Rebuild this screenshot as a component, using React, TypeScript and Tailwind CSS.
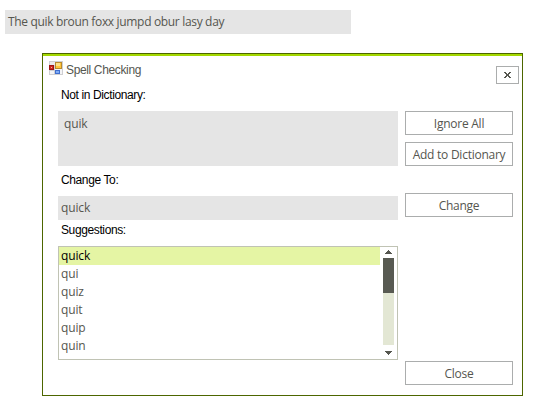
const suggestions = ["quick", "qui", "quiz", "quit", "quip", "quin"];

const ui = "font-['Open_Sans','Noto_Sans',sans-serif] text-[12px] text-[#55564f]";
const label = "font-['Liberation_Sans',Arial,sans-serif] text-[12px] leading-[14px] tracking-[-0.38px] text-black pl-[3px] whitespace-nowrap";

function Button({ text, className = "" }: { text: string; className?: string }) {
  return (
    <button className={`${ui} flex h-6 w-[108px] shrink-0 items-center justify-center border border-[#abadad] bg-white pt-px tracking-[-0.25px] whitespace-nowrap ${className}`}>
      {text}
    </button>
  );
}

function FormIcon() {
  return (
    <svg width="14" height="14" viewBox="0 0 14 14" shapeRendering="crispEdges">
      <rect width="14" height="14" fill="#cfcfd2" />
      <rect x="1" y="1" width="5" height="3" fill="#e9e9ec" />
      <rect x="1" y="10" width="4" height="3" fill="#f4f4f6" />
      <rect x="6" y="8" width="7" height="5" fill="#f4f4f6" />
      <rect x="0" y="4" width="5" height="5" fill="#9e1512" />
      <rect x="1" y="5" width="3" height="3" fill="#cf2a20" />
      <rect x="2" y="6" width="1" height="1" fill="#f8a898" />
      <rect x="6" y="1" width="7" height="7" fill="#b98a2c" />
      <rect x="7" y="2" width="5" height="5" fill="#ffc43a" />
      <rect x="7" y="2" width="4" height="3" fill="#ffe183" />
      <rect x="6" y="9" width="5" height="4" fill="#3f6fcf" />
      <rect x="7" y="10" width="3" height="2" fill="#7fabf6" />
    </svg>
  );
}

export default function App() {
  return (
    <div className="h-[408px] w-[544px] overflow-hidden bg-white pt-[10px]">
      <div className={`${ui} ml-[5px] flex h-6 w-[346px] items-center bg-[#e5e5e5] pl-[3px] tracking-[-0.33px] whitespace-nowrap`}>
        The quik broun foxx jumpd obur lasy day
      </div>

      <div className="mt-[19px] ml-[42px] h-[343px] w-[481px] border border-[#4d6600] bg-white">
        <div className="h-[2px] bg-[#a4d800]" />
        <div className="flex h-[32px] justify-between pr-[3px] pl-[6px]">
          <div className="flex pt-[5px]">
            <FormIcon />
            <span className="ml-[3px] font-['Liberation_Sans',Arial,sans-serif] text-[12px] leading-[18px] tracking-[-0.36px] text-[#55564f]">
              Spell Checking
            </span>
          </div>
          <button className="mt-[10px] flex h-[18px] w-[23px] items-center justify-center border border-[#abadad]">
            <svg width="7" height="6" viewBox="0 0 7 6" shapeRendering="crispEdges" fill="#55564f">
              <path d="M0 0h2v1h1v1h1v-1h1v-1h2v1h-1v1h-1v2h1v1h1v1h-2v-1h-1v-1h-1v1h-1v1h-2v-1h1v-1h1v-2h-1v-1h-1z" />
            </svg>
          </button>
        </div>

        <div className="flex gap-[7px] pl-[15px]">
          <div className="flex w-[340px] flex-col">
            <div className={`${label} h-[23px]`}>Not in Dictionary:</div>
            <div className={`${ui} h-[55px] bg-[#e5e5e5] pt-[4px] pl-[6px] leading-[17px] tracking-[-0.15px]`}>quik</div>
            <div className={`${label} h-[30px] pt-[7px]`}>Change To:</div>
            <div className={`${ui} flex h-6 items-center bg-[#e5e5e5] pl-[3px] tracking-[-0.15px]`}>quick</div>
            <div className={`${label} h-[26px] pt-[3px]`}>Suggestions:</div>
            <div className="flex h-[114px] border border-[#c0c3b4]">
              <ul className="w-[321px]">
                {suggestions.map((word, i) => (
                  <li key={word} className={`${ui} h-[18px] pl-[2px] leading-[18px] tracking-[-0.15px] ${i === 0 ? "bg-[#e5f5a4] !text-black" : ""}`}>
                    {word}
                  </li>
                ))}
              </ul>
              <div className="ml-[3px] flex w-[11px] flex-col items-center">
                <svg className="mt-[3px]" width="7" height="4" viewBox="0 0 7 4" shapeRendering="crispEdges">
                  <path d="M3 0h1v1h1v1h1v1h1v1h-7v-1h1v-1h1v-1h1z" fill="#55564f" />
                </svg>
                <div className="mt-[4px] h-[87px] w-full bg-[#e3e7d4]">
                  <div className="h-[35px] bg-[#585a52]" />
                </div>
                <svg className="mt-[6px]" width="7" height="4" viewBox="0 0 7 4" shapeRendering="crispEdges">
                  <path d="M0 0h7v1h-1v1h-1v1h-1v1h-1v-1h-1v-1h-1v-1h-1z" fill="#55564f" />
                </svg>
              </div>
            </div>
          </div>
          <div className="flex flex-col pt-[23px]">
            <Button text="Ignore All" />
            <Button text="Add to Dictionary" className="mt-[7px]" />
            <Button text="Change" className="mt-[27px]" />
            <Button text="Close" className="mt-[144px]" />
          </div>
        </div>
      </div>
    </div>
  );
}
